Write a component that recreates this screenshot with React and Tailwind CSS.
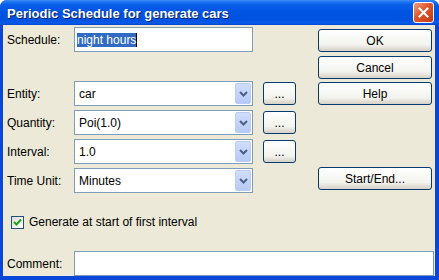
import React from 'react';

const font = { fontFamily: '"Liberation Sans", Arial, sans-serif' };

const Chevron = () => (
  <svg width="9" height="6" viewBox="0 0 9 6">
    <path d="M1 1 L4.5 4.5 L8 1" fill="none" stroke="#4D6185" strokeWidth="2" />
  </svg>
);

const Combo = ({ value }) => (
  <div className="flex h-[25px] w-[179px] items-center border border-[#7F9DB9] bg-white p-[1px]">
    <span className="flex-1 pl-[3px] text-[12px] text-black">{value}</span>
    <div className="flex h-full w-[16px] items-center justify-center rounded-[2px] border border-[#B9CDF8] bg-[linear-gradient(to_bottom,#D0DEFC,#B6CAF6)]">
      <Chevron />
    </div>
  </div>
);

const XpButton = ({ children, className = '' }) => (
  <button
    type="button"
    className={`flex h-[23px] items-center justify-center rounded-[3px] border border-[#003C74] bg-[linear-gradient(to_bottom,#FFFFFF,#F3F3EE_70%,#D6D0C5)] text-[12px] text-black ${className}`}
  >
    {children}
  </button>
);

const Row = ({ label, children, className = '' }) => (
  <div className={`flex h-[25px] items-center ${className}`}>
    <span className="w-[67px] text-[12px] text-black">{label}</span>
    {children}
  </div>
);

export default function App() {
  return (
    <div style={font} className="flex h-[280px] w-[439px] flex-col rounded-t-[7px] bg-[#0A46D8]">
      {/* Title bar */}
      <div className="flex h-[29px] items-center justify-between rounded-t-[7px] bg-[linear-gradient(to_bottom,#3D8BF5_0%,#1C74F2_8%,#0A5FE8_18%,#0054E3_45%,#0052E0_80%,#0A5AEB_92%,#0046CE_100%)] pl-[7px] pr-[5px]">
        <span className="pt-[3px] text-[13px] font-bold text-white [text-shadow:1px_1px_0_#0A1F72]">
          Periodic Schedule for generate cars
        </span>
        <div className="flex h-[21px] w-[21px] items-center justify-center rounded-[3px] border border-white bg-[linear-gradient(135deg,#F0A080,#E0552B_45%,#C13B17)]">
          <svg width="11" height="11" viewBox="0 0 11 11">
            <path d="M1.5 1.5 L9.5 9.5 M9.5 1.5 L1.5 9.5" stroke="white" strokeWidth="2" strokeLinecap="square" />
          </svg>
        </div>
      </div>

      {/* Body */}
      <div className="mb-[4px] ml-[3px] mr-[4px] flex flex-1 flex-col bg-[#ECE9D8] pl-[4px]">
        <div className="flex">
          <div className="flex flex-col pt-[2px]">
            <Row label="Schedule:">
              <div className="flex h-[25px] w-[179px] items-center border border-[#7F9DB9] bg-white pl-[2px]">
                <span className="border-r border-black bg-[#316AC5] text-[12px] leading-[14px] text-white">night hours</span>
              </div>
            </Row>
            <Row label="Entity:" className="mt-[29px]">
              <Combo value="car" />
              <XpButton className="ml-[10px] w-[33px]">...</XpButton>
            </Row>
            <Row label="Quantity:" className="mt-[4px]">
              <Combo value="Poi(1.0)" />
              <XpButton className="ml-[10px] w-[33px]">...</XpButton>
            </Row>
            <Row label="Interval:" className="mt-[4px]">
              <Combo value="1.0" />
              <XpButton className="ml-[10px] w-[33px]">...</XpButton>
            </Row>
            <Row label="Time Unit:" className="mt-[4px]">
              <Combo value="Minutes" />
            </Row>
          </div>
          <div className="ml-auto mr-[3px] flex w-[114px] flex-col pt-[4px]">
            <XpButton>OK</XpButton>
            <XpButton className="mt-[4px]">Cancel</XpButton>
            <XpButton className="mt-[3px]">Help</XpButton>
            <XpButton className="mt-[62px]">Start/End...</XpButton>
          </div>
        </div>

        <div className="mt-[20px] flex items-center pl-[4px]">
          <div className="flex h-[13px] w-[13px] items-center justify-center border border-[#1C5180] bg-[linear-gradient(135deg,#DCDCD7,#FFFFFF)]">
            <svg width="9" height="9" viewBox="0 0 9 9">
              <path d="M1 4 L3.5 6.5 L8 1.5" fill="none" stroke="#21A121" strokeWidth="2" />
            </svg>
          </div>
          <span className="ml-[5px] text-[12px] text-black">Generate at start of first interval</span>
        </div>

        <div className="mt-[20px] flex h-[25px] items-center">
          <span className="w-[67px] text-[12px] text-black">Comment:</span>
          <div className="mr-[1px] h-[25px] flex-1 border border-[#7F9DB9] bg-white" />
        </div>
      </div>
    </div>
  );
}
